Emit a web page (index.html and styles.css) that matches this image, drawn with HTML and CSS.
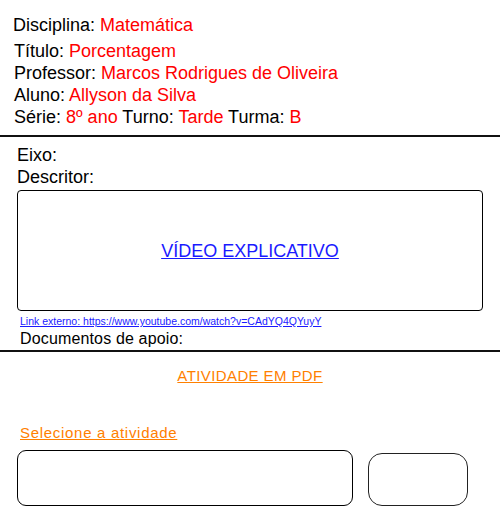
FILE: index.html
```html
<!DOCTYPE html>
<html lang="pt-BR">
<head>
    <meta charset="utf-8">
    <link rel="stylesheet" href="styles.css">
</head>
<body>
  <div class="cabecalho">
    <p class="disciplina">Disciplina: <span class="valor">Matemática</span></p>
    <p>Título: <span class="valor">Porcentagem</span></p>
    <p>Professor: <span class="valor">Marcos Rodrigues de Oliveira</span></p>
    <p>Aluno: <span class="valor">Allyson da Silva</span></p>
    <p>Série: <span class="valor">8º ano</span> Turno: <span class="valor">Tarde</span> Turma: <span class="valor">B</span></p>
  </div>
  <div class="conteudo">
    <p>Eixo:</p>
    <p>Descritor:</p>
    <div class="video">
      <a href="#">VÍDEO EXPLICATIVO</a>
    </div>
    <a class="link-externo" href="#">Link externo: https://www.youtube.com/watch?v=CAdYQ4QYuyY</a>
    <p class="documentos">Documentos de apoio:</p>
  </div>
  <div class="atividade">
    <a class="pdf" href="#">ATIVIDADE EM PDF</a>
    <a class="selecione" href="#">Selecione a atividade</a>
    <div class="campos">
      <div class="campo"></div>
      <div class="botao"></div>
    </div>
  </div>
</body>
</html>
```
FILE: styles.css
```css
body {
  margin: 0;
  font-family: "Liberation Sans", Arial, sans-serif;
  color: #000;
}

p {
  margin: 0;
}

.cabecalho {
  padding: 14px 14px 7px;
  font-size: 18px;
  line-height: 22px;
  border-bottom: 2px solid #111;
}

.cabecalho .disciplina {
  margin-left: -1px;
  margin-bottom: 4px;
}

.valor {
  color: #ff0000;
}

.conteudo {
  padding: 7px 17px 0;
  font-size: 18px;
  line-height: 22px;
  border-bottom: 2px solid #111;
}

.video {
  margin-top: 2px;
  height: 119px;
  border: 1.5px solid #000;
  border-radius: 4px;
  display: flex;
  align-items: center;
  justify-content: center;
}

.video a {
  color: #1a1aff;
  font-size: 18px;
}

.link-externo {
  display: block;
  margin: 3px 0 0 3px;
  font-size: 10.5px;
  line-height: 14px;
  color: #1a1aff;
}

.documentos {
  margin-left: 3px;
  font-size: 16px;
  line-height: 22px;
  letter-spacing: 0.15px;
}

.atividade {
  padding: 14px 17px 0;
}

.atividade a {
  color: #ff8000;
  font-size: 15px;
  letter-spacing: 0.4px;
}

.pdf {
  display: block;
  text-align: center;
  line-height: 20px;
}

.selecione {
  display: inline-block;
  margin: 37px 0 0 3px;
  line-height: 20px;
  letter-spacing: 0.7px !important;
}

.campos {
  display: flex;
  align-items: flex-end;
  gap: 15px;
  margin-top: 7px;
}

.campo {
  width: 334px;
  height: 54px;
  border: 1.5px solid #000;
  border-radius: 9px;
}

.botao {
  width: 98px;
  height: 51px;
  border: 1.5px solid #222;
  border-radius: 14px;
}
```
